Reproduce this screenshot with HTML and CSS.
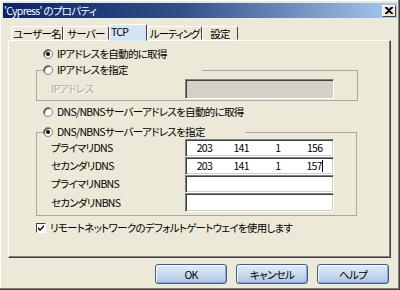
FILE: index.html
```html
<!DOCTYPE html>
<html lang="ja">
<head>
  <meta charset="UTF-8">
  <title>'Cypress' のプロパティ</title>
  <link rel="stylesheet" href="styles.css">
</head>
<body>

<div class="window">
  <div class="titlebar">
    <span class="title">'Cypress' のプロパティ</span>
    <span class="close-btn">
      <svg width="8" height="7" viewBox="0 0 8 7"><path d="M0 0h2l2 2 2-2h2v1L5 3.5 8 6v1H6L4 5 2 7H0V6l3-2.5L0 1z" fill="#000"/></svg>
    </span>
  </div>

  <div class="content">
    <div class="tabs">
      <div class="tab tab-user">ユーザー名</div>
      <div class="tab tab-server">サーバー</div>
      <div class="tab tab-tcp active">TCP</div>
      <div class="tab tab-route">ルーティング</div>
      <div class="tab tab-conf">設定</div>
    </div>

    <div class="panel">
      <div class="option option-top"><span class="radio checked"></span>IPアドレスを自動的に取得</div>

      <fieldset class="group group-ip">
        <legend class="legend legend-ip"><span class="radio"></span>IPアドレスを指定</legend>
        <div class="field-row tall">
          <span class="field-label disabled">IPアドレス</span>
          <div class="ip-box disabled"></div>
        </div>
      </fieldset>

      <div class="option option-dns"><span class="radio"></span>DNS/NBNSサーバーアドレスを自動的に取得</div>

      <fieldset class="group group-dns">
        <legend class="legend legend-dns"><span class="radio checked"></span>DNS/NBNSサーバーアドレスを指定</legend>
        <div class="field-row">
          <span class="field-label">プライマリDNS</span>
          <div class="ip-box"><span>203</span><span>141</span><span>1</span><span>156</span></div>
        </div>
        <div class="field-row">
          <span class="field-label">セカンダリDNS</span>
          <div class="ip-box"><span>203</span><span>141</span><span>1</span><span>157<i class="caret"></i></span></div>
        </div>
        <div class="field-row">
          <span class="field-label">プライマリNBNS</span>
          <div class="ip-box"></div>
        </div>
        <div class="field-row last">
          <span class="field-label">セカンダリNBNS</span>
          <div class="ip-box"></div>
        </div>
      </fieldset>

      <div class="option option-check">
        <span class="checkbox">
          <svg width="8" height="8" viewBox="0 0 8 8"><path d="M1 3l2 2 4-4v2L3 7 1 5z" fill="#000"/></svg>
        </span>リモートネットワークのデフォルトゲートウェイを使用します
      </div>
    </div>

    <div class="buttons">
      <button class="btn">OK</button>
      <button class="btn">キャンセル</button>
      <button class="btn">ヘルプ</button>
    </div>
  </div>
</div>

</body>
</html>
```

FILE: styles.css
```css
body {
  margin: 0;
  font-family: "Noto Sans CJK JP", "DejaVu Sans", sans-serif;
  font-size: 10.5px;
  letter-spacing: -0.7px;
  font-feature-settings: "palt";
  line-height: 16px;
  color: #000;
  background: #ece9d8;
}
.window {
  width: 400px;
  height: 290px;
  box-sizing: border-box;
  padding: 3px;
  background: #ece9d8;
  box-shadow: inset -1px -1px #404040, inset -2px -2px #808080, inset 1px 1px #fff;
}
.titlebar {
  height: 15px;
  display: flex;
  align-items: center;
  justify-content: space-between;
  background: linear-gradient(to right, #0a246a 0%, #2f5088 45%, #a6caf0 100%);
  padding-left: 1px;
}
.title {
  color: #fff;
  line-height: 15px;
  white-space: nowrap;
}
.close-btn {
  width: 14px;
  height: 12px;
  box-sizing: border-box;
  margin-right: 1px;
  display: flex;
  align-items: center;
  justify-content: center;
  background: #ece9d8;
  border: 1px solid;
  border-color: #fff #404040 #404040 #fff;
}
.content {
  padding: 6px 6px 0 5px;
}
.tabs {
  display: flex;
  align-items: flex-end;
  height: 16px;
  padding-left: 3px;
}
.tab {
  height: 14px;
  box-sizing: border-box;
  line-height: 13px;
  padding: 0 1px;
  border: 1px solid;
  border-color: #fff #404040 transparent #fff;
  border-radius: 2px 2px 0 0;
  white-space: nowrap;
  text-align: center;
}
.tab-user { width: 52px; }
.tab-server { width: 46px; }
.tab-tcp { width: 38px; }
.tab-route { width: 55px; letter-spacing: -1.1px; }
.tab-conf { width: 36px; }
.tab.active {
  height: 17px;
  margin-bottom: -1px;
  background: #d5e5f6;
  line-height: 14px;
  text-align: left;
}
.panel {
  width: 383px;
  height: 218px;
  box-sizing: border-box;
  padding: 5px 0 0 0;
  border: 1px solid;
  border-color: #fff #404040 #404040 #fff;
  box-shadow: inset -1px -1px #808080;
}
.option {
  display: flex;
  align-items: center;
  height: 16px;
  padding-left: 34px;
  white-space: nowrap;
}
.option-dns {
  margin-top: 3px;
}
.option-check {
  margin-top: 4px;
  padding-left: 27px;
}
.radio {
  width: 10px;
  height: 10px;
  box-sizing: border-box;
  flex: none;
  display: inline-block;
  vertical-align: -1px;
  margin-right: 4px;
  border-radius: 50%;
  border: 1px solid #808080;
  background: #fff;
  box-shadow: inset 1px 1px #404040;
  position: relative;
}
.radio.checked::after {
  content: "";
  position: absolute;
  left: 2px;
  top: 2px;
  width: 4px;
  height: 4px;
  border-radius: 50%;
  background: #000;
}
.checkbox {
  width: 10px;
  height: 10px;
  box-sizing: border-box;
  flex: none;
  display: flex;
  align-items: center;
  justify-content: center;
  margin-right: 4px;
  background: #fff;
  border: 1px solid;
  border-color: #404040 #fff #fff #404040;
}
.group {
  margin: 0 0 0 27px;
  padding: 0 0 1px 6px;
  border: 1px solid #aca899;
  min-width: 0;
}
.group-ip {
  width: 322px;
  box-sizing: border-box;
}
.group-dns {
  width: 321px;
  box-sizing: border-box;
  margin-top: 5px;
  padding-bottom: 3px;
}
.legend {
  padding: 0;
  white-space: nowrap;
  background: #ece9d8;
}
.legend-ip {
  width: 159px;
  line-height: 16px;
}
.legend-dns {
  width: 202px;
  line-height: 14px;
}
.field-row {
  display: grid;
  grid-template-columns: 134px 149px;
  align-items: center;
  height: 18px;
  margin-left: 8px;
}
.field-row.tall {
  height: 20px;
  margin-top: 1px;
}
.field-row.last {
  height: 19px;
}
.field-label {
  white-space: nowrap;
}
.field-label.disabled {
  color: #aca899;
  text-shadow: 1px 1px #fff;
}
.ip-box {
  height: 100%;
  box-sizing: border-box;
  display: grid;
  grid-template-columns: repeat(4, 1fr);
  align-items: center;
  text-align: center;
  background: #fff;
  border: 1px solid;
  border-color: #808080 #fff #fff #808080;
  box-shadow: inset 1px 1px #404040, inset -1px -1px #d4d0c8;
  line-height: 14px;
}
.ip-box.disabled {
  background: #d4d0c8;
}
.caret {
  display: inline-block;
  width: 1px;
  height: 12px;
  background: #000;
  vertical-align: -2px;
}
.buttons {
  display: flex;
  justify-content: flex-end;
  gap: 9px;
  padding: 6px 2px 0 0;
}
.btn {
  width: 72px;
  height: 20px;
  padding: 0;
  font-family: inherit;
  font-size: 10.5px;
  letter-spacing: -0.7px;
  font-feature-settings: "palt";
  color: #000;
  border: 1px solid #3e5e92;
  border-radius: 3px;
  background: linear-gradient(#e4ecf8, #c4d6ee 60%, #a9c0e2);
  box-shadow: inset 1px 1px #f4f8fe, inset -1px -1px #8aa6d0;
}
```
